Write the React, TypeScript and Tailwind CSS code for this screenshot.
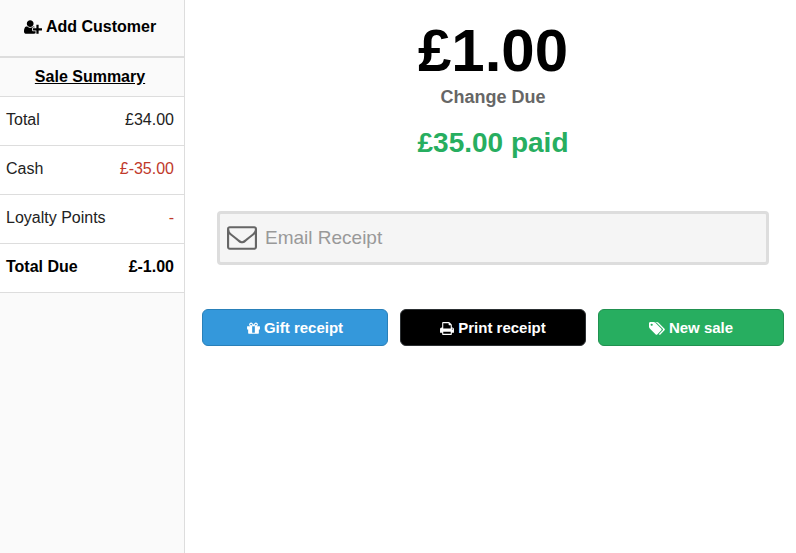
const summary = [
  { label: "Total", amount: "£34.00", color: "text-[#222]" },
  { label: "Cash", amount: "£-35.00", color: "text-[#c0392b]" },
  { label: "Loyalty Points", amount: "-", color: "text-[#c0392b]" },
];

const UserPlusIcon = () => (
  <svg viewBox="0 0 2048 1792" className="h-4 w-[18px] fill-current" aria-hidden="true">
    <path d="M704 896q-159 0-271.500-112.500t-112.500-271.500 112.500-271.500 271.500-112.500 271.500 112.500 112.500 271.500-112.500 271.500-271.500 112.500zm960 128h352q13 0 22.500 9.500t9.500 22.500v192q0 13-9.500 22.500t-22.500 9.500h-352v352q0 13-9.500 22.500t-22.500 9.500h-192q-13 0-22.500-9.500t-9.500-22.500v-352h-352q-13 0-22.500-9.500t-9.500-22.500v-192q0-13 9.500-22.500t22.500-9.500h352v-352q0-13 9.500-22.500t22.500-9.500h192q13 0 22.500 9.500t9.500 22.500v352zm-736 224q0 52 38 90t90 38h256v238q-68 50-171 50h-874q-121 0-194-69t-73-190q0-53 3.500-103.500t14-109 26.500-108.500 43-97.500 62-81 85.500-53.500 111.500-20q19 0 39 17 79 61 154.500 91.500t164.500 30.500 164.500-30.500 154.500-91.500q20-17 39-17 132 0 217 96h-223q-52 0-90 38t-38 90v192z" />
  </svg>
);

const EnvelopeIcon = () => (
  <svg viewBox="0 64 1792 1792" className="h-[30px] w-[30px] shrink-0 fill-[#666]" aria-hidden="true">
    <path d="M1664 1504v-768q-32 36-69 66-268 206-426 338-51 43-83 67t-86.500 48.500-102.500 24.500h-2q-48 0-102.500-24.500t-86.500-48.500-83-67q-158-132-426-338-37-30-69-66v768q0 13 9.500 22.500t22.500 9.500h1472q13 0 22.500-9.500t9.500-22.500zm0-1051v-24.500l-.5-13-3-12.500-5.500-9-9-7.500-14-2.500h-1472q-13 0-22.500 9.500t-9.500 22.500q0 168 147 284 193 152 401 317 6 5 35 29.500t46 37.500 44.500 31.500 50.500 27.500 43 9h2q20 0 43-9t50.500-27.500 44.500-31.500 46-37.500 35-29.500q208-165 401-317 54-43 100.500-115.500t46.500-131.500zm128-37v1088q0 66-47 113t-113 47h-1472q-66 0-113-47t-47-113v-1088q0-66 47-113t113-47h1472q66 0 113 47t47 113z" />
  </svg>
);

const GiftIcon = () => (
  <svg viewBox="128 0 1536 1792" className="h-[15px] w-[13px] fill-current" aria-hidden="true">
    <path d="M1056 1356v-716h-320v716q0 25 18 38.500t46 13.500h192q28 0 46-13.500t18-38.500zm-456-844h195l-126-161q-26-31-69-31-40 0-68 28t-28 68 28 68 68 28zm688-96q0-40-28-68t-68-28q-43 0-69 31l-125 161h194q40 0 68-28t28-68zm376 256v320q0 14-9 23t-23 9h-96v416q0 40-28 68t-68 28h-1088q-40 0-68-28t-28-68v-416h-96q-14 0-23-9t-9-23v-320q0-14 9-23t23-9h440q-93 0-158.500-65.500t-65.500-158.500 65.500-158.500 158.500-65.500q107 0 168 77l128 165 128-165q61-77 168-77 93 0 158.500 65.500t65.500 158.500-65.500 158.500-158.500 65.500h440q14 0 23 9t9 23z" />
  </svg>
);

const PrintIcon = () => (
  <svg viewBox="64 0 1664 1792" className="h-[15px] w-[14px] fill-current" aria-hidden="true">
    <path d="M448 1536h896v-256h-896v256zm0-640h896v-384h-160q-40 0-68-28t-28-68v-160h-640v640zm1152 64q0-26-19-45t-45-19-45 19-19 45 19 45 45 19 45-19 19-45zm128 0v416q0 13-9.500 22.500t-22.500 9.500h-224v160q0 40-28 68t-68 28h-960q-40 0-68-28t-28-68v-160h-224q-13 0-22.500-9.500t-9.500-22.500v-416q0-79 56.500-135.500t135.500-56.500h64v-544q0-40 28-68t68-28h672q40 0 88 20t76 48l152 152q28 28 48 76t20 88v256h64q79 0 135.500 56.500t56.500 135.500z" />
  </svg>
);

const TagsIcon = () => (
  <svg viewBox="128 0 1920 1792" className="h-[15px] w-4 fill-current" aria-hidden="true">
    <path d="M576 448q0-53-37.500-90.500t-90.500-37.500-90.500 37.500-37.500 90.500 37.500 90.500 90.500 37.500 90.500-37.500 37.500-90.500zm1067 576q0 53-37 90l-491 492q-39 37-91 37-53 0-90-37l-715-716q-38-37-64.500-101t-26.500-117v-416q0-52 38-90t90-38h416q53 0 117 26.500t102 64.500l715 714q37 39 37 91zm384 0q0 53-37 90l-491 492q-39 37-91 37-36 0-59-14t-53-45l470-470q37-37 37-90 0-52-37-91l-715-714q-38-38-102-64.500t-117-26.500h224q53 0 117 26.500t102 64.500l715 714q37 39 37 91z" />
  </svg>
);

const App = () => {
  return (
    <div className="flex min-h-screen bg-white font-['Liberation_Sans',Arial,sans-serif] text-black">
      <aside className="w-[185px] shrink-0 border-r border-[#ddd] bg-[#fafafa]">
        <button className="flex h-14 w-full items-center justify-center gap-1 pr-1 pb-0.5 text-base font-bold">
          <UserPlusIcon />
          Add Customer
        </button>
        <h2 className="flex h-10 items-center justify-center border-t-2 border-[#ddd] pr-1 text-base font-bold underline">
          Sale Summary
        </h2>
        <table className="w-full bg-white text-base">
          <tbody>
            {summary.map((row) => (
              <tr key={row.label} className="h-[49px] border-t border-[#ddd]">
                <td className="pb-0.5 pl-1.5 text-[#222]">{row.label}</td>
                <td className={`pr-2.5 pb-0.5 text-right ${row.color}`}>{row.amount}</td>
              </tr>
            ))}
            <tr className="h-[49px] border-y border-[#ddd] font-bold">
              <td className="pb-0.5 pl-1.5">Total Due</td>
              <td className="pr-2.5 pb-0.5 text-right">£-1.00</td>
            </tr>
          </tbody>
        </table>
      </aside>

      <main className="min-w-0 flex-1 pt-[21px] pr-3 pl-[17px]">
        <div className="text-center font-bold">
          <h1 className="text-[60px] leading-[60px]">£1.00</h1>
          <p className="mt-1 text-lg leading-6 text-[#666]">Change Due</p>
          <p className="mt-4 text-[28px] leading-9 text-[#27ae60]">£35.00 paid</p>
        </div>

        <label className="mx-[15px] mt-[50px] flex h-[54px] items-center gap-2 rounded-sm border-3 border-[#ddd] bg-[#f5f5f5] px-[7px]">
          <EnvelopeIcon />
          <input
            type="email"
            aria-label="Email Receipt"
            placeholder="Email Receipt"
            className="min-w-0 flex-1 bg-transparent text-[19px] outline-none placeholder:text-[#999]"
          />
        </label>

        <div className="mt-11 grid grid-cols-3 gap-3 text-[15px] font-bold text-white">
          <button className="flex h-[37px] items-center justify-center gap-1 rounded-md border border-[#2980b9] bg-[#3498db] pt-0.5">
            <GiftIcon />
            Gift receipt
          </button>
          <button className="flex h-[37px] items-center justify-center gap-1 rounded-md border border-[#2c3033] bg-black pt-0.5">
            <PrintIcon />
            Print receipt
          </button>
          <button className="flex h-[37px] items-center justify-center gap-1 rounded-md border border-[#219150] bg-[#27ae60] pt-0.5">
            <TagsIcon />
            New sale
          </button>
        </div>
      </main>
    </div>
  );
};

export default App;
